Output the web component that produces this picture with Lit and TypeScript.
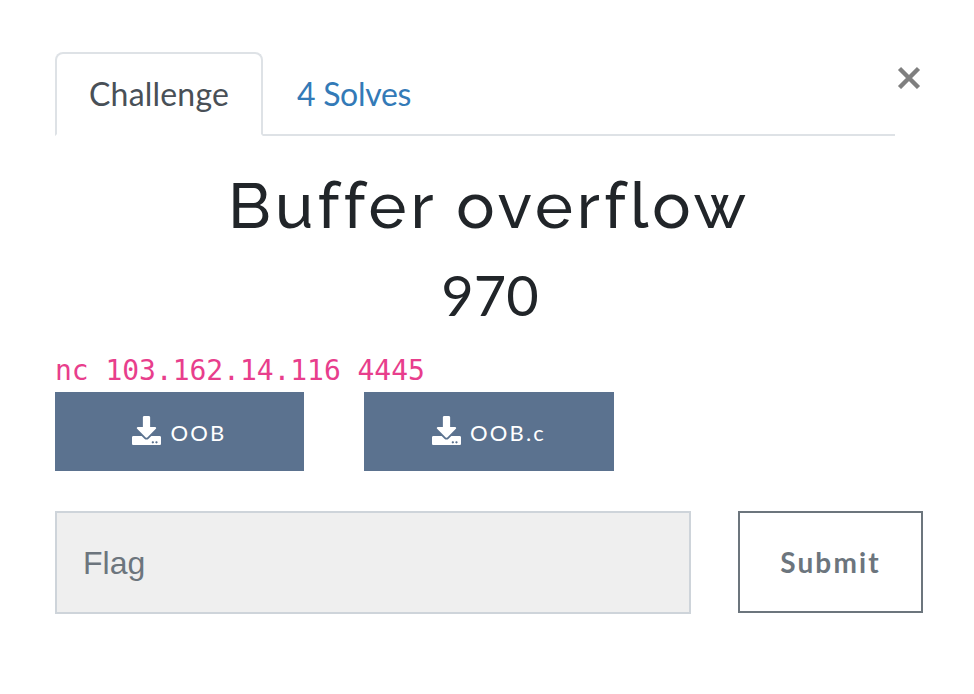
import { LitElement, html, css, svg } from "lit";
import { customElement, property } from "lit/decorators.js";

@customElement("file-button")
class FileButton extends LitElement {
  @property() name = "";

  static styles = css`
    :host {
      display: block;
    }
    .file {
      box-sizing: border-box;
      display: flex;
      align-items: center;
      justify-content: center;
      width: 100%;
      height: 79px;
      padding: 0;
      border: 0;
      background: #5b728f;
      color: #fff;
      font: 400 22px/34px Lato, sans-serif;
      letter-spacing: 2.2px;
    }
    .icon {
      width: 29px;
      height: 29px;
      margin: -3px 9px 0 0;
      fill: currentColor;
    }
    .name {
      padding-top: 2px;
    }
  `;

  render() {
    return html`<button class="file">
      <svg class="icon" viewBox="0 0 512 512" aria-hidden="true">
        ${svg`<path d="M216 0h80c13.300 0 24 10.700 24 24v168h87.700c17.800 0 26.700 21.500 14.100 34.100L269.700 378.300c-7.500 7.500-19.800 7.500-27.300 0L90.100 226.100c-12.600-12.600-3.700-34.100 14.100-34.100H192V24c0-13.300 10.700-24 24-24zm296 376v112c0 13.300-10.700 24-24 24H24c-13.300 0-24-10.700-24-24V376c0-13.300 10.700-24 24-24h146.700l49 49c20.100 20.100 52.500 20.100 72.600 0l49-49H488c13.300 0 24 10.700 24 24zm-124 88c0-11-9-20-20-20s-20 9-20 20 9 20 20 20 20-9 20-20zm64 0c0-11-9-20-20-20s-20 9-20 20 9 20 20 20 20-9 20-20z"/>`}
      </svg>
      <span class="name">${this.name}</span>
    </button>`;
  }
}

@customElement("app-root")
class AppRoot extends LitElement {
  static styles = css`
    :host {
      display: block;
      box-sizing: border-box;
      width: 974px;
      height: 694px;
      padding: 52px 51px 0 55px;
      overflow: hidden;
      background: #fff;
      color: #212529;
      font-family: Lato, sans-serif;
    }
    .top {
      display: flex;
      align-items: flex-start;
      height: 84px;
    }
    .tabs {
      box-sizing: border-box;
      display: flex;
      width: 840px;
      height: 84px;
      border-bottom: 2px solid #dee2e6;
    }
    .tab {
      box-sizing: border-box;
      height: 84px;
      padding: 16px 32px;
      border: 2px solid transparent;
      color: #337ab7;
      font-size: 32px;
      line-height: 48px;
      letter-spacing: -0.3px;
      white-space: nowrap;
    }
    .tab.active {
      width: 208px;
      border-color: #dee2e6 #dee2e6 #fff;
      border-radius: 8px 8px 0 0;
      background: #fff;
      color: #495057;
      letter-spacing: 0.2px;
    }
    .close {
      width: 24px;
      height: 24px;
      margin: 13px 0 0 2px;
      stroke: #7f7f7f;
      stroke-width: 4.4;
      fill: none;
      flex: none;
    }
    .title {
      margin: 32px 0 0;
      font: 500 64px/76px Raleway, Lato, sans-serif;
      letter-spacing: 4px;
      text-align: center;
      white-space: nowrap;
    }
    .points {
      margin: 17px 0 0;
      padding-left: 2px;
      font-size: 56px;
      font-weight: 400;
      line-height: 67px;
      text-align: center;
    }
    .host {
      display: block;
      margin-top: 23px;
      height: 41px;
      color: #e83e8c;
      font: 28px/40px "DejaVu Sans Mono", monospace;
      letter-spacing: -0.05px;
      white-space: pre;
    }
    .files {
      display: grid;
      grid-template-columns: 249px 250px;
      column-gap: 60px;
    }
    .answer {
      display: flex;
      justify-content: space-between;
      margin-top: 40px;
    }
    .flag {
      box-sizing: border-box;
      width: 636px;
      height: 103px;
      padding: 2px 26px 0;
      border: 2px solid #ced4da;
      border-radius: 0;
      background: #efefef;
      font: 32px "Liberation Sans", Arial, sans-serif;
    }
    .flag::placeholder {
      color: #6c757d;
      opacity: 1;
    }
    .submit {
      width: 185px;
      height: 102px;
      padding: 0;
      border: 2px solid #6c757d;
      background: #fff;
      color: #6c757d;
      font: 700 28px Lato, sans-serif;
      letter-spacing: 2.15px;
    }
  `;

  render() {
    return html`
      <div class="top">
        <nav class="tabs">
          <a class="tab active">Challenge</a>
          <a class="tab">4 Solves</a>
        </nav>
        <svg class="close" viewBox="0 0 24 24" aria-label="Close">
          <path d="M2.500 3.500 21.500 22.500M21.500 3.500 2.500 22.500" />
        </svg>
      </div>
      <h2 class="title">Buffer overflow</h2>
      <h3 class="points">970</h3>
      <code class="host">nc 103.162.14.116 4445</code>
      <div class="files">
        <file-button name="OOB"></file-button>
        <file-button name="OOB.c"></file-button>
      </div>
      <div class="answer">
        <input class="flag" placeholder="Flag" />
        <button class="submit">Submit</button>
      </div>
    `;
  }
}
